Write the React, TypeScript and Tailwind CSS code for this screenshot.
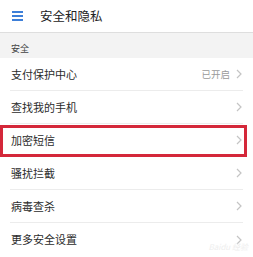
const font = { fontFamily: '"Noto Sans CJK SC", "Noto Sans", sans-serif' };

function Chevron() {
  return (
    <svg width="6" height="10" viewBox="0 0 6 10" className="shrink-0">
      <path d="M1 1l4 4-4 4" fill="none" stroke="#c4c4c4" strokeWidth="1.2" />
    </svg>
  );
}

function Row({ label, value, last, marked }: { label: string; value?: string; last?: boolean; marked?: boolean }) {
  return (
    <div className="relative h-[33px]">
      <div className={`mx-[10px] h-full flex items-center justify-between ${last ? "" : "border-b border-[#ececec]"}`}>
        <span className="text-[11px] text-[#2b2b2b] pl-[1px]">{label}</span>
        <div className="flex items-center gap-[6px] pr-[1px]">
          {value && <span className="text-[9.5px] text-[#9a9a9a]">{value}</span>}
          <Chevron />
        </div>
      </div>
      {marked && <div className="absolute left-0 right-[6px] top-[1px] bottom-0 border-[3px] border-[#d4283a]" />}
    </div>
  );
}

export default function App() {
  return (
    <div className="w-[253px] h-[257px] bg-white overflow-hidden relative" style={font}>
      <div className="h-[33px] flex items-center border-b border-[#dedede] shadow-[0_1px_1px_rgba(0,0,0,0.04)]">
        <div className="ml-[12px] flex flex-col gap-[2.5px] w-[11px]">
          <div className="h-[1.5px] bg-[#3d7fd8]" />
          <div className="h-[1.5px] bg-[#3d7fd8]" />
          <div className="h-[1.5px] bg-[#3d7fd8]" />
        </div>
        <span className="ml-[17px] text-[12.5px] text-[#222]">安全和隐私</span>
      </div>
      <div className="h-[25px] bg-[#f3f3f3] flex items-center pt-[7px] px-[11px] text-[9px] text-[#444]">安全</div>
      <Row label="支付保护中心" value="已开启" />
      <Row label="查找我的手机" />
      <Row label="加密短信" marked />
      <Row label="骚扰拦截" />
      <Row label="病毒查杀" />
      <Row label="更多安全设置" last />
      <div className="absolute right-[5px] bottom-[6px] text-[8px] leading-none text-[#eeeeee] italic">Baidu 经验</div>
    </div>
  );
}
